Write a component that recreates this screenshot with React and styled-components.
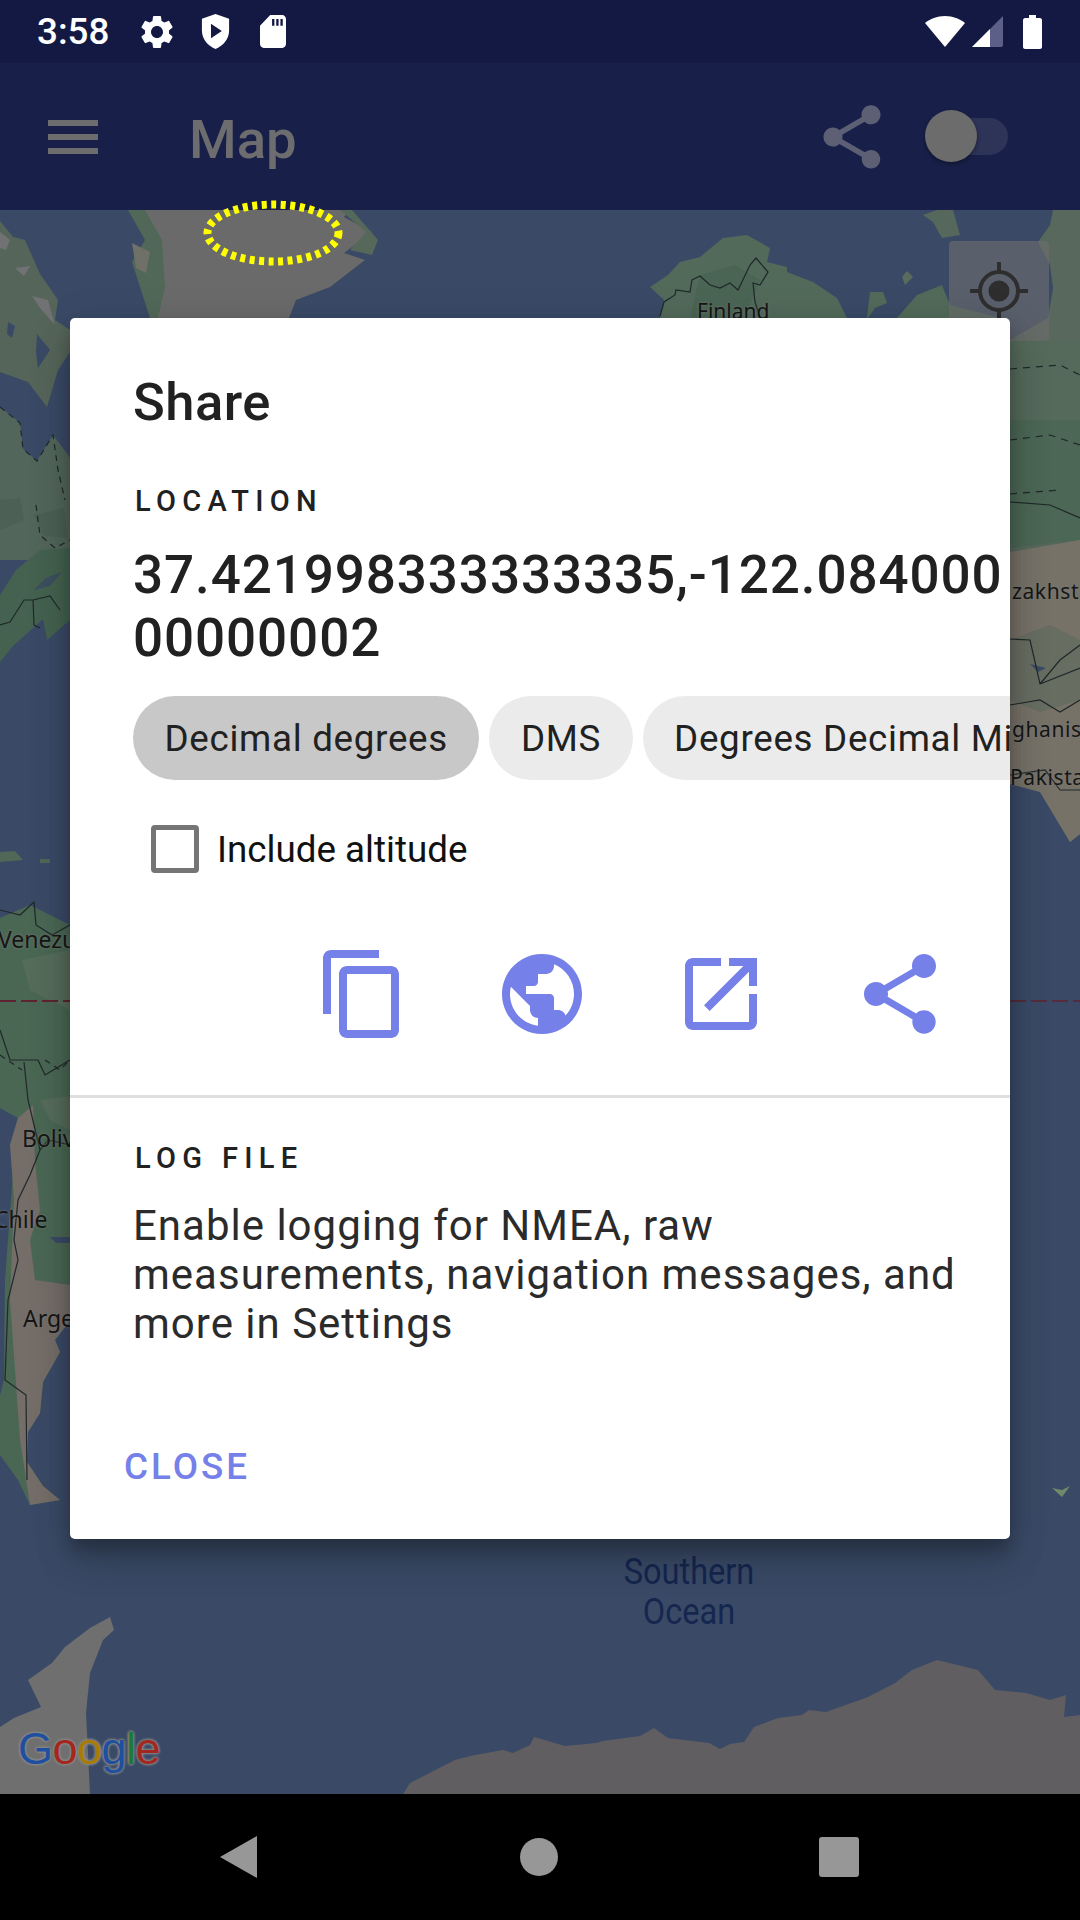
import React from 'react'
import styled, { createGlobalStyle } from 'styled-components'

const Global = createGlobalStyle`
  html, body { margin: 0; padding: 0; background: #000; }
  * { box-sizing: border-box; }
  body { font-family: Roboto, "Liberation Sans", sans-serif; }
`

const Screen = styled.div`
  width: 1080px;
  height: 1920px;
  display: flex;
  flex-direction: column;
  position: relative;
  overflow: hidden;
`

const StatusBar = styled.div`
  height: 63px;
  flex: none;
  background: #141943;
  display: flex;
  align-items: center;
  padding: 0 38px 0 37px;
  color: #fff;
`
const Clock = styled.span`
  font-size: 36.75px;
  font-weight: 500;
  width: 100px;
`
const Slot = styled.div`
  display: flex;
  margin-left: ${p => p.$left || 0};
`

const AppBar = styled.div`
  height: 147px;
  flex: none;
  background: #18204a;
  display: flex;
  align-items: center;
  padding: 0 72px 0 48px;
`
const Title = styled.h1`
  margin: 4px 0 0 91px;
  font-size: 54.5px;
  font-weight: 500;
  color: #6d6d6f;
`
const BarActions = styled.div`
  margin-left: auto;
  display: flex;
  align-items: center;
  gap: 37px;
`
const SwitchTrack = styled.div`
  width: 81px;
  height: 37px;
  border-radius: 19px;
  background: #2e3358;
  position: relative;
`
const SwitchThumb = styled.div`
  position: absolute;
  left: -2px;
  top: -8px;
  width: 52px;
  height: 52px;
  border-radius: 50%;
  background: #6c6c6c;
  box-shadow: 0 2px 4px rgba(0, 0, 0, 0.4);
`

const MapArea = styled.div`
  flex: 1;
  background: #3a4a66;
  position: relative;
  overflow: hidden;
`
const MapDrawing = styled.svg`
  display: block;
  width: 100%;
  height: 100%;
`
const SelectionRing = styled.svg`
  position: absolute;
  left: 203px;
  top: 198px;
`
const LocateButton = styled.div`
  position: absolute;
  left: 949px;
  top: 31px;
  width: 100px;
  height: 100px;
  border-radius: 4px;
  background: rgba(110, 110, 110, 0.6);
  display: flex;
  align-items: center;
  justify-content: center;
`
const MapLabel = styled.span`
  position: absolute;
  left: ${p => p.$x}px;
  top: ${p => p.$y}px;
  font-family: "Noto Sans", "Liberation Sans", sans-serif;
  font-size: ${p => p.$size || 23}px;
  letter-spacing: ${p => p.$spacing || 0}px;
  line-height: 1;
  color: #161616;
  white-space: nowrap;
  text-shadow: 0 0 3px rgba(130, 130, 130, 0.7);
`
const OceanLabel = styled.div`
  position: absolute;
  left: 591px;
  top: 1342px;
  width: 196px;
  text-align: center;
  font-size: 37px;
  line-height: 40px;
  color: #15264f;
  transform: scaleX(0.88);
`
const GoogleMark = styled.div`
  position: absolute;
  left: 18px;
  top: 1516px;
  font-family: "Liberation Sans", sans-serif;
  font-size: 45px;
  letter-spacing: -0.5px;
  line-height: 1;
  text-shadow: 0 0 3px #8b8b8b, 0 0 3px #8b8b8b, 0 0 3px #8b8b8b;
`
const GoogleLetter = styled.span`
  color: ${p => p.$color};
`

const NavBar = styled.div`
  height: 126px;
  flex: none;
  background: #000;
  display: flex;
  align-items: center;
  padding-left: 219px;
  gap: 261px;
`

const Dialog = styled.div`
  position: absolute;
  left: 70px;
  top: 318px;
  width: 940px;
  height: 1221px;
  background: #fff;
  border-radius: 5px;
  box-shadow: 0 24px 38px rgba(0, 0, 0, 0.14), 0 9px 46px rgba(0, 0, 0, 0.12), 0 11px 15px rgba(0, 0, 0, 0.2);
  display: flex;
  flex-direction: column;
  overflow: hidden;
`
const DialogTitle = styled.h2`
  margin: 57px 0 0;
  padding: 0 0 0 63px;
  height: 54px;
  font-size: 52.5px;
  line-height: 54px;
  font-weight: 500;
  letter-spacing: 0.5px;
  color: #212121;
`
const Overline = styled.div`
  padding-left: 65px;
  font-size: 29px;
  font-weight: 500;
  letter-spacing: 6.3px;
  line-height: 34px;
  color: #212121;
  margin-top: ${p => p.$top}px;
`
const Coords = styled.div`
  margin: 26px 0 0 63px;
  font-size: 53px;
  line-height: 63px;
  font-weight: 500;
  letter-spacing: 0.9px;
  color: #212121;
  width: 878px;
  word-break: break-all;
`
const ChipRow = styled.div`
  display: flex;
  gap: 10px;
  margin: 26px 0 0 63px;
  white-space: nowrap;
`
const Chip = styled.div`
  height: 84px;
  flex: none;
  border-radius: 42px;
  padding: 0 31.5px;
  display: flex;
  align-items: center;
  font-size: 36.75px;
  letter-spacing: 0.7px;
  color: #212121;
  background: ${p => (p.$active ? '#c8c8c8' : '#ebebeb')};
`
const CheckRow = styled.div`
  display: flex;
  align-items: center;
  margin: 45px 0 0 81px;
  font-size: 36.75px;
  color: #111;
`
const CheckBox = styled.div`
  width: 48px;
  height: 48px;
  border: 5px solid #757575;
  border-radius: 4px;
  margin-right: 18px;
`
const ShareIcons = styled.div`
  display: flex;
  justify-content: flex-end;
  align-items: center;
  gap: 83px;
  margin-top: 73px;
  padding-right: 62px;
  height: 96px;
`
const Divider = styled.div`
  height: 3px;
  background: #e0e0e0;
  margin-top: 53px;
  flex: none;
`
const Body = styled.p`
  margin: 26px 0 0 63px;
  width: 850px;
  font-size: 42px;
  line-height: 49px;
  letter-spacing: 1px;
  color: #2b2b2b;
`
const CloseButton = styled.div`
  margin: 99px 0 0 54px;
  font-size: 36.75px;
  line-height: 40px;
  font-weight: 500;
  letter-spacing: 3px;
  color: #7580e8;
`

const accent = '#7580e8'

const MdIcon = ({ d, size, color = accent }) => (
  <svg width={size} height={size} viewBox="0 0 24 24" fill={color}>
    <path d={d} />
  </svg>
)

const PATHS = {
  copy: 'M16 1H4c-1.100 0-2 .9-2 2v14h2V3h12V1zm3 4H8c-1.100 0-2 .9-2 2v14c0 1.100.9 2 2 2h11c1.100 0 2-.9 2-2V7c0-1.100-.9-2-2-2zm0 16H8V7h11v14z',
  globe: 'M12 2C6.480 2 2 6.480 2 12s4.480 10 10 10 10-4.480 10-10S17.520 2 12 2zm-1 17.930c-3.950-.49-7-3.850-7-7.930 0-.62.08-1.210.21-1.790L9 15v1c0 1.100.9 2 2 2v1.930zm6.900-2.540c-.26-.81-1-1.390-1.900-1.390h-1v-3c0-.55-.45-1-1-1H8v-2h2c.55 0 1-.45 1-1V7h2c1.100 0 2-.9 2-2v-.41c2.930 1.190 5 4.060 5 7.410 0 2.080-.8 3.970-2.100 5.390z',
  open: 'M19 19H5V5h7V3H5c-1.110 0-2 .9-2 2v14c0 1.100.89 2 2 2h14c1.100 0 2-.9 2-2v-7h-2v7zM14 3v2h3.590l-9.830 9.830 1.410 1.410L19 6.410V10h2V3h-7z',
  share: 'M18 16.080c-.76 0-1.440.3-1.960.77L8.910 12.700c.05-.23.09-.46.09-.7s-.04-.47-.09-.7l7.050-4.110c.54.5 1.250.81 2.040.81 1.660 0 3-1.340 3-3s-1.340-3-3-3-3 1.340-3 3c0 .24.04.47.09.7L8.040 9.810C7.500 9.310 6.790 9 6 9c-1.660 0-3 1.340-3 3s1.340 3 3 3c.79 0 1.500-.31 2.040-.81l7.120 4.160c-.05.21-.08.43-.08.65 0 1.610 1.310 2.920 2.920 2.920 1.610 0 2.920-1.310 2.920-2.920s-1.310-2.920-2.920-2.920z',
  gear: 'M19.140 12.940c.04-.3.06-.61.06-.94 0-.32-.02-.64-.07-.94l2.030-1.580c.18-.14.23-.41.12-.61l-1.920-3.320c-.12-.22-.37-.29-.59-.22l-2.390.96c-.5-.38-1.030-.7-1.620-.94l-.36-2.540c-.04-.24-.24-.41-.48-.41h-3.840c-.24 0-.43.17-.47.41l-.36 2.540c-.59.24-1.130.57-1.620.94l-2.390-.96c-.22-.08-.47 0-.59.22L2.740 8.870c-.12.21-.08.47.12.61l2.030 1.580c-.05.3-.09.63-.09.94s.02.64.07.94l-2.030 1.580c-.18.14-.23.41-.12.61l1.920 3.320c.12.22.37.29.59.22l2.390-.96c.5.38 1.030.7 1.620.94l.36 2.540c.05.24.24.41.48.41h3.840c.24 0 .44-.17.47-.41l.36-2.540c.59-.24 1.130-.56 1.620-.94l2.390.96c.22.08.47 0 .59-.22l1.920-3.320c.12-.22.07-.47-.12-.61l-2.010-1.580zM12 15.600c-1.980 0-3.600-1.620-3.600-3.600s1.620-3.600 3.600-3.600 3.600 1.620 3.600 3.600-1.620 3.600-3.600 3.600z',
}

const Shield = () => (
  <svg width="29" height="35" viewBox="0 0 32 36" preserveAspectRatio="none" fill="#fff">
    <path fillRule="evenodd" d="M16 0 L31 5 V17 C31 26 24 33 16 36 C8 33 1 26 1 17 V5 Z M11 10 V25 L23 17.500 Z" />
  </svg>
)
const SdCard = () => (
  <svg width="26" height="33" viewBox="0 0 28 34" preserveAspectRatio="none" fill="#fff">
    <path fillRule="evenodd" d="M11 0 H24 C26 0 28 2 28 4 V30 C28 32 26 34 24 34 H4 C2 34 0 32 0 30 V11 Z M13 4 V11 H15.500 V4 Z M17.500 4 V11 H20 V4 Z M22 4 V11 H24.500 V4 Z" />
  </svg>
)
const Wifi = () => (
  <svg width="40" height="31" viewBox="0 0 40 31">
    <path fill="#fff" d="M20 31 L0 7 C5 3 12 0 20 0 C28 0 35 3 40 7 Z" />
  </svg>
)
const Signal = () => (
  <svg width="31" height="31" viewBox="0 0 31 31">
    <path fill="#5c6088" d="M31 0 V29 C31 30 30 31 29 31 H0 Z" />
    <path fill="#fff" d="M18 13 V31 H0 Z" />
  </svg>
)
const Battery = () => (
  <svg width="19" height="34" viewBox="0 0 19 34">
    <path fill="#fff" d="M6 0 H13 V3 H17 C18 3 19 4 19 5 V32 C19 33 18 34 17 34 H2 C1 34 0 33 0 32 V5 C0 4 1 3 2 3 H6 Z" />
  </svg>
)

const Target = () => (
  <svg width="58" height="58" viewBox="0 0 58 58" fill="none" stroke="#2e2e2e" strokeWidth="4">
    <circle cx="29" cy="29" r="19" />
    <circle cx="29" cy="29" r="10.500" fill="#2e2e2e" stroke="none" />
    <path d="M29 0 V9 M29 49 V58 M0 29 H9 M49 29 H58" />
  </svg>
)

const water = '#3a4a66'
const border = '#20282a'

// colours picked from the dimmed reference, so no scrim is laid on top
const MapArt = () => (
  <MapDrawing viewBox="0 210 1080 1584" preserveAspectRatio="none">
    {/* greenland */}
    <path fill="#516858" d="M128 210 L145 240 L132 262 L150 318 H172 L176 270 L158 225 L152 210 Z" />
    <path fill="#6a6a6a" d="M145 210 L162 240 L165 287 L158 318 H289 L296 300 L330 287 L365 260 L344 253 L372 232 L344 217 L350 210 Z" />
    <path fill="#56685a" d="M340 210 L352 210 L378 240 L372 255 L350 250 L366 232 Z" />
    <path fill="#6f7068" d="M132 243 L150 252 L146 273 L136 268 Z" />
    {/* top left land and hudson bay */}
    <path fill="#56655a" d="M0 221 L13 237 L25 240 L40 274 L58 300 L55 320 L70 330 V560 H0 Z" />
    <path fill="#77767a" d="M0 232 L10 240 L6 250 L0 248 Z M15 268 L30 266 L24 276 Z M32 296 L48 300 L55 325 L40 308 Z" opacity="0.8" />
    <path fill={water} d="M0 372 L28 382 L47 407 L58 370 L70 352 V458 L53 435 L37 461 L23 449 L20 423 L0 407 Z" />
    <path fill={water} d="M37 334 L50 350 L38 368 L36 352 Z M8 322 L15 326 L12 338 L7 334 Z" />
    <path fill="#52665b" d="M0 407 L20 423 L23 449 L37 461 L53 435 L70 458 V560 H0 Z" />
    <path fill="#4c6055" d="M0 500 L20 498 L24 520 L0 530 Z M34 515 L64 508 L68 538 L44 536 Z" />
    <path fill="#44624f" d="M0 595 L16 570 L40 550 L70 548 V620 L47 640 L43 619 L13 646 L0 662 Z" />
    <path fill={water} d="M34 590 L46 578 L62 572 L50 586 Z" opacity="0.75" />
    <path fill="none" stroke={border} strokeWidth="1.200" strokeDasharray="6 5" d="M0 407 L20 423 L23 449 L37 461 L53 435 L58 470 L65 500 M36 505 L40 535 L55 548 L70 540" />
    <path fill="none" stroke={border} strokeWidth="1.200" d="M0 625 L10 622 L24 600 L33 600 L34 625 L40 628 M33 600 L50 596 L60 610" />
    {/* caribbean bits */}
    <path fill="#4f6858" d="M0 852 L15 851 L23 860 L0 862 Z M40 859 H50 V863 H40 Z" />
    {/* south america */}
    <path fill="#4a6754" d="M0 918 L30 905 L70 925 V1321 L55 1340 L60 1352 L43 1382 L40 1413 L28 1432 L27 1462 L43 1486 L60 1500 L30 1505 L18 1480 L0 1455 V1395 L4 1380 L5 1280 L14 1160 L10 1145 L18 1118 L0 1108 Z" />
    <path fill="#746d68" d="M18 1118 L33 1105 L35 1160 L40 1210 L30 1240 L35 1280 L70 1285 V1321 L55 1340 L60 1352 L43 1382 L40 1413 L28 1432 L27 1462 L43 1486 L60 1500 L30 1505 L20 1440 L10 1300 L14 1200 L10 1145 Z" />
    <path fill="#566c5b" d="M22 960 L70 950 V1010 L30 990 Z M40 1100 L70 1096 V1130 L50 1120 Z" />
    <path fill={water} d="M50 1237 H70 V1243 H56 Z" />
    <path fill="none" stroke={border} strokeWidth="1.200" d="M0 910 L20 915 L34 902 L36 925 L52 935 L70 925 M0 1030 L10 1060 L38 1060 L45 1075 L70 1060 M24 1062 L28 1100 L40 1150 L48 1140 L70 1145 M40 1150 L30 1175 L18 1200 L14 1240 L18 1260 L8 1300 L5 1380 L26 1395 L27 1480" />
    <path fill="none" stroke={border} strokeWidth="1.200" strokeDasharray="6 5" d="M0 1055 L22 1070 M45 1060 L60 1070 L70 1060" />
    {/* equator */}
    <line x1="0" y1="1001" x2="70" y2="1001" stroke="#5e2330" strokeWidth="2" strokeDasharray="16 5" />
    <line x1="1010" y1="1001" x2="1080" y2="1001" stroke="#5e2330" strokeWidth="1.500" strokeDasharray="16 5" />
    {/* finland and russia coast */}
    <path fill="#526a5a" d="M650 287 L668 275 L680 262 L700 257 L723 238 L747 235 L770 248 L767 262 L787 267 L787 272 L813 282 L837 298 L847 318 H660 L664 300 Z" />
    <path fill="#4a6554" d="M700 275 L735 265 L760 280 L745 318 H690 Z" />
    <path fill="none" stroke={border} strokeWidth="1.200" d="M660 316 L664 302 L675 295 L676 290 L690 292 L692 280 L700 276 L710 285 L720 288 L730 283 L738 290 L750 265 L756 258 L768 272 L760 285 L753 283 L755 302 L760 318" />
    <path fill="#5a6b5e" d="M902 277 L907 271 L913 277 L905 285 Z" />
    <path fill="#526a5a" d="M870 292 L883 292 L887 303 L875 308 L868 318 H867 Z" />
    <path fill="#526a5a" d="M897 318 L917 295 L942 285 L950 305 L1000 318 Z" />
    <path fill="#56685b" d="M923 215 L937 210 H953 L960 235 L942 238 L933 222 Z" />
    <path fill="#58685d" d="M1053 210 H1080 V834 L1070 842 L1040 792 L1010 784 V340 L1048 318 L1053 288 L1050 265 L1038 242 L1050 225 Z" />
    <path fill="#4c6755" d="M1010 420 L1050 400 L1080 420 V540 L1010 548 Z" />
    <path fill="#556a5b" d="M1010 340 H1080 V420 L1010 420 Z" />
    <path fill="#767268" d="M1010 552 L1080 540 V834 L1070 842 L1040 792 L1010 784 Z" />
    <path fill="#686d62" d="M1010 640 L1050 625 L1080 640 V700 L1040 712 L1010 700 Z" />
    <path fill={water} d="M1030 664 L1046 668 L1038 672 Z" />
    <path fill="none" stroke={border} strokeWidth="1.200" d="M1010 502 L1050 505 L1080 518 M1010 639 L1030 640 L1040 684 L1080 668 M1010 705 L1040 700 L1060 712 L1080 700 M1040 684 L1060 660 L1080 645 M1010 775 L1045 770 L1060 790 L1080 790" />
    <path fill="none" stroke={border} strokeWidth="1.200" strokeDasharray="7 6" d="M1010 369 L1060 365 L1080 375 M1010 440 L1050 435 L1080 445 M1010 494 L1060 490" />
    {/* small island */}
    <path fill="#6f8a6a" d="M1052 1488 L1062 1490 L1070 1486 L1062 1497 Z" />
    {/* southern tip and antarctica */}
    <path fill="#706f70" d="M110 1617 L90 1628 L65 1647 L52 1663 L28 1680 L41 1707 L14 1718 L0 1727 V1794 H90 L86 1713 L90 1673 L103 1640 L114 1630 Z" />
    <path fill="#605e60" d="M403 1794 L410 1783 L455 1760 L475 1755 L503 1750 L513 1753 L530 1745 L534 1737 L565 1746 L596 1743 L603 1741 L640 1736 L654 1728 L668 1738 L709 1743 L720 1749 L730 1744 L744 1742 L754 1727 L778 1718 L802 1715 L809 1710 L826 1712 L868 1697 L895 1683 L912 1670 L937 1660 L978 1670 L995 1690 L1026 1693 L1050 1700 L1066 1695 L1064 1717 L1080 1715 V1794 Z" />
  </MapDrawing>
)

const App = () => (
  <Screen>
    <Global />
    <StatusBar>
      <Clock>3:58</Clock>
      <MdIcon d={PATHS.gear} size={40} color="#fff" />
      <Slot $left="24px"><Shield /></Slot>
      <Slot $left="30px"><SdCard /></Slot>
      <Slot $left="auto"><Wifi /></Slot>
      <Slot $left="7px"><Signal /></Slot>
      <Slot $left="20px"><Battery /></Slot>
    </StatusBar>

    <AppBar>
      <svg width="50" height="34" viewBox="0 0 50 34" fill="#6d6d6f">
        <rect width="50" height="6" />
        <rect y="14" width="50" height="6" />
        <rect y="28" width="50" height="6" />
      </svg>
      <Title>Map</Title>
      <BarActions>
        <MdIcon d={PATHS.share} size={76} color="#5d6074" />
        <SwitchTrack>
          <SwitchThumb />
        </SwitchTrack>
      </BarActions>
    </AppBar>

    <MapArea>
      <MapArt />
      <MapLabel $x={697} $y={91} $size={21}>Finland</MapLabel>
      <MapLabel $x={1012} $y={371} $size={21} $spacing={0.6}>zakhsta</MapLabel>
      <MapLabel $x={1012} $y={509} $size={21} $spacing={0.6}>ghanist</MapLabel>
      <MapLabel $x={1010} $y={557} $size={21} $spacing={0.6}>Pakista</MapLabel>
      <MapLabel $x={-2} $y={718}>Venezu</MapLabel>
      <MapLabel $x={22} $y={917}>Boliv</MapLabel>
      <MapLabel $x={-6} $y={998}>Chile</MapLabel>
      <MapLabel $x={23} $y={1097}>Arge</MapLabel>
      <OceanLabel>Southern<br />Ocean</OceanLabel>
      <GoogleMark>
        <GoogleLetter $color="#1f4f9f">G</GoogleLetter>
        <GoogleLetter $color="#a3271f">o</GoogleLetter>
        <GoogleLetter $color="#a87b06">o</GoogleLetter>
        <GoogleLetter $color="#1f4f9f">g</GoogleLetter>
        <GoogleLetter $color="#1c7a38">l</GoogleLetter>
        <GoogleLetter $color="#a3271f">e</GoogleLetter>
      </GoogleMark>
      <LocateButton>
        <Target />
      </LocateButton>
    </MapArea>

    <SelectionRing width="140" height="70" viewBox="0 0 140 70">
      <ellipse cx="70" cy="35" rx="65.500" ry="28.500" fill="none" stroke="#ffff00" strokeWidth="8" strokeDasharray="5 4.500" />
    </SelectionRing>

    <NavBar>
      <svg width="40" height="42" viewBox="0 0 40 42" fill="#979797"><path d="M38 0 V42 L1 21 Z" /></svg>
      <svg width="38" height="38" viewBox="0 0 38 38" fill="#979797"><circle cx="19" cy="19" r="19" /></svg>
      <svg width="40" height="40" viewBox="0 0 40 40" fill="#979797"><rect width="40" height="40" rx="3" /></svg>
    </NavBar>

    <Dialog>
      <DialogTitle>Share</DialogTitle>
      <Overline $top={55}>LOCATION</Overline>
      <Coords>37.421998333333335,-122.08400000000002</Coords>
      <ChipRow>
        <Chip $active>Decimal degrees</Chip>
        <Chip>DMS</Chip>
        <Chip>Degrees Decimal Minutes</Chip>
      </ChipRow>
      <CheckRow>
        <CheckBox />
        Include altitude
      </CheckRow>
      <ShareIcons>
        <MdIcon d={PATHS.copy} size={96} />
        <MdIcon d={PATHS.globe} size={96} />
        <MdIcon d={PATHS.open} size={96} />
        <MdIcon d={PATHS.share} size={96} />
      </ShareIcons>
      <Divider />
      <Overline $top={43}>LOG FILE</Overline>
      <Body>Enable logging for NMEA, raw measurements, navigation messages, and more in Settings</Body>
      <CloseButton>CLOSE</CloseButton>
    </Dialog>
  </Screen>
)

export default App
